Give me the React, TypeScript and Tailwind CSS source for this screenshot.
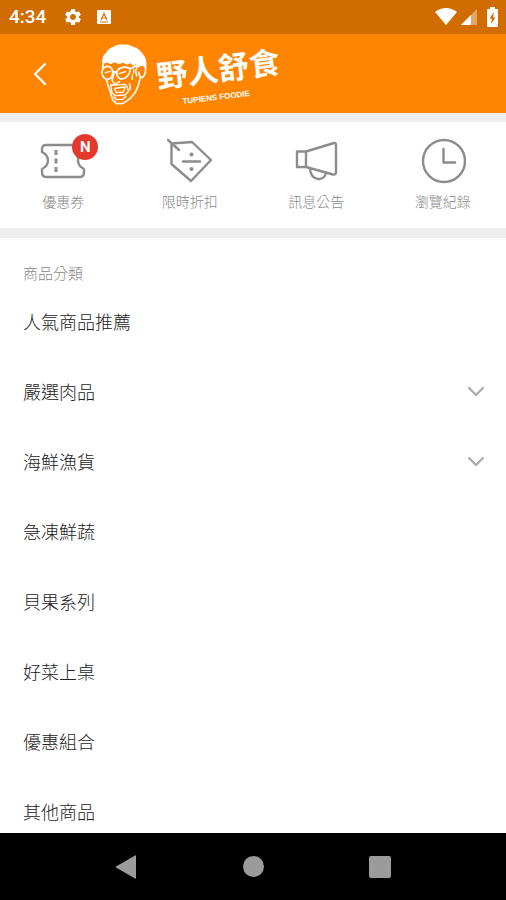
import type { ReactNode } from "react";

const shortcuts: { label: string; icon: ReactNode; isNew?: boolean }[] = [
  {
    label: "優惠券",
    isNew: true,
    icon: (
      <>
        <path d="M6 10H40Q44 10 44 14V17Q38 20 38 25.500Q38 31 44 34V37Q44 42 40 42H6Q2 42 2 37V34Q8 31 8 25.500Q8 20 2 17V14Q2 10 6 10Z" />
        <path d="M16 15V20M16 23.500V28.500M16 32V37" strokeWidth="3" strokeLinecap="butt" />
      </>
    ),
  },
  {
    label: "限時折扣",
    icon: (
      <>
        <path d="M4.500 8.500L25 7L44 25L24 46L4.500 29ZM1 5L12 15" />
        <path d="M16 26.500H33" />
        <circle cx="24.500" cy="19.500" r="2" fill="currentColor" stroke="none" />
        <circle cx="24.500" cy="34" r="2" fill="currentColor" stroke="none" />
      </>
    ),
  },
  {
    label: "訊息公告",
    icon: (
      <>
        <path d="M4 16.500H13V32H4ZM13 16.500L41 8Q43 7.500 43 10V37Q43 40 40 39.500L13 32" />
        <path d="M17 34C18 46 31 47 33 38" />
      </>
    ),
  },
  {
    label: "瀏覽紀錄",
    icon: (
      <>
        <circle cx="24" cy="26" r="21" />
        <path d="M23.500 14V27.500H35" />
      </>
    ),
  },
];

const categories = [
  { name: "人氣商品推薦" },
  { name: "嚴選肉品", expandable: true },
  { name: "海鮮漁貨", expandable: true },
  { name: "急凍鮮蔬" },
  { name: "貝果系列" },
  { name: "好菜上桌" },
  { name: "優惠組合" },
  { name: "其他商品" },
];

function StatusBar() {
  return (
    <div className="flex h-[34px] shrink-0 items-center bg-[#d06c00] pr-[7px] pl-[9px] text-white">
      <span className="w-[54px] font-[Roboto,sans-serif] text-[19px] leading-6 font-medium">4:34</span>
      <svg className="size-[20px]" viewBox="0 0 24 24" fill="currentColor" aria-hidden="true">
        <path d="M19.140 12.940c.04-.3.060-.610.060-.940 0-.320-.020-.640-.070-.940l2.030-1.580c.18-.140.230-.410.120-.610l-1.920-3.320c-.12-.220-.370-.290-.590-.220l-2.390.960c-.5-.380-1.030-.7-1.620-.940L14.400 2.810c-.04-.240-.240-.410-.480-.410h-3.840c-.24 0-.430.170-.470.410L9.250 5.350c-.59.240-1.130.570-1.620.940L5.240 5.330c-.22-.080-.470 0-.590.220L2.740 8.870c-.12.210-.080.470.120.610l2.030 1.580c-.05.300-.09.630-.09.940s.02.640.07.940l-2.030 1.580c-.18.140-.23.410-.12.610l1.920 3.320c.12.220.37.290.59.220l2.390-.96c.5.380 1.030.700 1.620.940l.36 2.540c.05.240.24.410.48.410h3.840c.24 0 .44-.170.47-.410l.36-2.540c.59-.240 1.130-.560 1.620-.940l2.390.96c.22.080.47 0 .59-.220l1.920-3.320c.12-.220.07-.470-.12-.610l-2.010-1.580zM12 15.600c-1.980 0-3.600-1.620-3.600-3.600s1.620-3.600 3.600-3.600 3.600 1.620 3.600 3.600-1.620 3.600-3.600 3.600z" />
      </svg>
      <svg className="ml-[14px] size-[14px]" viewBox="0 0 14 14" aria-hidden="true">
        <rect width="14" height="14" rx="1" fill="currentColor" />
        <path d="M4 10L7 3.500L10 10M5 8H9M3 12H11" fill="none" stroke="#d06c00" strokeWidth="1.200" />
      </svg>
      <svg className="ml-auto h-[18px] w-[22px]" viewBox="0 0 22 18" fill="currentColor" aria-hidden="true">
        <path d="M0 4Q11-4 22 4L11 17Z" />
      </svg>
      <svg className="ml-[3px] h-[18px] w-[18px]" viewBox="0 0 18 18" fill="currentColor" aria-hidden="true">
        <path d="M1 17L17 1V17Z" opacity="0.4" />
        <path d="M1 17L11 7V17Z" />
      </svg>
      <svg className="ml-[8px] h-[20px] w-[13px]" viewBox="0 0 13 20" aria-hidden="true">
        <path d="M4 0H9V2H11Q12 2 12 3V19Q12 20 11 20H2Q1 20 1 19V3Q1 2 2 2H4Z" fill="currentColor" />
        <path d="M8 5L3.500 11.500H6L5 17L9.500 10.500H7Z" fill="#d06c00" />
      </svg>
    </div>
  );
}

function BrandLogo() {
  return (
    <svg className="h-[78px] w-[200px]" viewBox="0 0 200 78" role="img" aria-label="野人舒食 TUPIENS FOODIE">
      <g transform="scale(0.3333)" fill="none" stroke="white" strokeWidth="5" strokeLinejoin="round" strokeLinecap="round">
        <path
          d="M39 84C38 66 44 59 51 54C58 38 72 39 78 34C90 28 103 33 112 31C121 33 128 38 139 41C149 46 155 57 161 64C168 77 168 87 166 97C162 88 153 88 145 94L139 85L130 89L122 82L110 86L100 80L87 85L72 79L63 85L52 80Z"
          fill="white"
        />
        <path d="M40 84L38 97M166 92C169 107 165 123 157 128C151 127 147 120 146 112M146 92C138 96 135 108 140 122M151 127L145 151L136 172L121 190L99 205L79 206L68 194L61 171L54 151L50 136" />
        <path d="M42 98Q57 89 65 101Q73 115 62 130Q48 138 38 123Q32 107 42 98ZM82 107C91 94 112 94 121 102C120 120 107 133 93 132C82 130 77 118 82 107ZM67 109L80 112M119 102L139 92" />
        <path
          d="M46 113L60 109M88 116L106 110M73 115L66 136L74 147L89 140M62 150L75 150L105 148Q116 159 114 172L104 180L76 182L66 173ZM73 160L79 173L100 171L105 157M73 160L105 156M72 186L80 194L98 193L108 184M118 146Q123 153 119 165M127 120V134M131 104V114"
          strokeWidth="4"
        />
      </g>
      <text
        x="68"
        y="53"
        transform="rotate(-7 68 53)"
        fill="white"
        className="font-['Noto_Sans_CJK_TC',sans-serif] text-[31px] font-bold"
      >
        野人舒食
      </text>
      <text
        x="93"
        y="69"
        transform="rotate(-7 93 69)"
        fill="white"
        className="font-['Liberation_Sans',sans-serif] text-[8px] font-bold"
      >
        TUPIENS FOODIE
      </text>
    </svg>
  );
}

export default function App() {
  return (
    <div className="flex h-screen flex-col bg-white font-['Noto_Sans_CJK_TC',sans-serif]">
      <StatusBar />
      <header className="flex h-[79px] shrink-0 items-center bg-[#ff8400] pl-5 text-white">
        <button type="button" aria-label="返回" className="flex size-10 items-center justify-center">
          <svg className="h-[24px] w-[14px]" viewBox="0 0 14 24" fill="none" stroke="currentColor" strokeWidth="2.400" strokeLinecap="round" strokeLinejoin="round">
            <path d="M12 2L2 12L12 22" />
          </svg>
        </button>
        <div className="ml-[30px]">
          <BrandLogo />
        </div>
      </header>

      <nav className="grid h-[125px] shrink-0 grid-cols-4 border-t-[9px] border-b-[10px] border-[#eeeeee]">
        {shortcuts.map(({ label, icon, isNew }) => (
          <button key={label} type="button" className="flex flex-col items-center pt-[13px] text-[#8c8c8c]">
            <span className="relative">
              <svg className="h-[50px] w-[46px]" viewBox="0 0 46 50" fill="none" stroke="currentColor" strokeWidth="2.400" strokeLinejoin="round" strokeLinecap="round" aria-hidden="true">
                {icon}
              </svg>
              {isNew && (
                <span className="absolute -top-[1px] left-[32px] flex size-[26px] items-center justify-center rounded-full bg-[#e5392d] font-[Roboto,sans-serif] text-[15px] leading-none font-bold text-white">
                  N
                </span>
              )}
            </span>
            <span className="mt-[6px] text-[14px] leading-5 font-light text-[#888888]">{label}</span>
          </button>
        ))}
      </nav>

      <main className="min-h-0 flex-1 overflow-y-auto [scrollbar-width:none]">
        <h2 className="h-[48px] pt-[23px] pl-[23px] text-[15px] leading-6 font-light text-[#888888]">商品分類</h2>
        <ul>
          {categories.map(({ name, expandable }) => (
            <li key={name}>
              <button type="button" className="flex h-[70px] w-full items-center justify-between pr-[21px] pl-[23px] text-left text-[18px] leading-7 font-light text-[#222222]">
                {name}
                {expandable && (
                  <svg className="h-[12px] w-[18px]" viewBox="0 0 18 12" fill="none" stroke="#aaaaaa" strokeWidth="2.200" strokeLinecap="round" strokeLinejoin="round" aria-hidden="true">
                    <path d="M2 3L9 10L16 3" />
                  </svg>
                )}
              </button>
            </li>
          ))}
        </ul>
      </main>

      <footer className="flex h-[67px] shrink-0 items-center justify-center gap-[87px] bg-black text-[#9b9b9b]">
        <button type="button" aria-label="上一頁" className="flex size-10 items-center justify-center">
          <svg className="size-6" viewBox="0 0 24 24" fill="currentColor">
            <path d="M21 0.500Q22 0 22 1V23Q22 24 21 23.500L2 12.500Q1 12 2 11.500Z" />
          </svg>
        </button>
        <button type="button" aria-label="主畫面" className="flex size-10 items-center justify-center">
          <span className="size-[21px] rounded-full bg-current" />
        </button>
        <button type="button" aria-label="最近使用" className="flex size-10 items-center justify-center">
          <span className="size-[22px] rounded-[2px] bg-current" />
        </button>
      </footer>
    </div>
  );
}
